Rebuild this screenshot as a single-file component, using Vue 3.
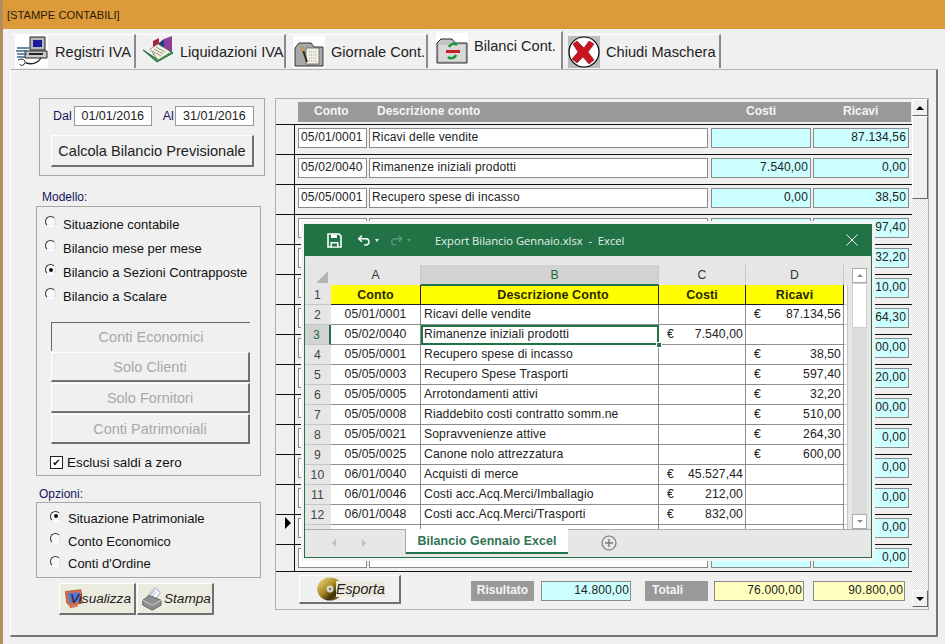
<template>
  <div class="app">
    <div class="title">[STAMPE CONTABILI]</div>

    <div class="tabs">
      <div class="tab t1">
        <svg class="tab-ico" width="33" height="33" viewBox="0 0 33 33">
          <rect width="33" height="33" fill="#fff"/>
          <path d="M15 2h15v13H15z" fill="#b8b8b8" stroke="#222"/>
          <rect x="18" y="5" width="9" height="7" fill="#1a1a9a"/>
          <path d="M10 16h22v7H10z" fill="#c8c8c8" stroke="#222"/>
          <path d="M14 19h14" stroke="#222" stroke-width="2"/>
          <path d="M2 13h12M1 16h11M2 19h10M2 22h9" stroke="#3a6a8a" stroke-width="1.5"/>
          <path d="M3 25c4-2 8 0 7 3s-5 3-5 1" fill="#fff" stroke="#222"/>
          <path d="M11 28c6 2 12 0 15-5" fill="none" stroke="#222" stroke-width="1.4"/>
        </svg>
        <span>Registri IVA</span>
      </div>
      <div class="tab t2">
        <svg class="tab-ico" width="33" height="33" viewBox="0 0 33 33">
          <path d="M11 6l6-3v14l-6 3z" fill="#b3223a"/>
          <path d="M17 8l5-4v13l-5 2z" fill="#1e3f7a"/>
          <path d="M22 4l8-3v16l-8 3z" fill="#8a3fa0"/>
          <path d="M1 15l14 12 16-9-3-3-13 9z" fill="#3da35a" stroke="#1e6a36"/>
          <path d="M8 14l8-5 13 8-13 8z" fill="#f4f3dc" stroke="#666" stroke-width=".6"/>
          <path d="M12 14l9 5M14 12l9 5M10 16l9 5" stroke="#777" stroke-width=".8"/>
        </svg>
        <span>Liquidazioni IVA</span>
      </div>
      <div class="tab t3">
        <svg class="tab-ico" width="32" height="32" viewBox="0 0 32 32">
          <rect width="32" height="32" fill="#fff"/>
          <path d="M2 12l4-5h12l3 4h9v19H2z" fill="#a8a8a8" stroke="#333"/>
          <path d="M13 12h13v16H13z" fill="#f2f2e8" stroke="#555" stroke-width=".7"/>
          <path d="M16 16h8M16 19h8M16 22h8M16 25h8" stroke="#999" stroke-dasharray="1 1"/>
          <path d="M9 11l5 15" stroke="#3a2a14" stroke-width="2"/>
          <path d="M9 11l1.5 4" stroke="#e0b040" stroke-width="2"/>
        </svg>
        <span>Giornale Cont.</span>
      </div>
      <div class="tab t4 active">
        <svg class="tab-ico" width="32" height="32" viewBox="0 0 32 32">
          <rect width="32" height="32" fill="#fff"/>
          <path d="M1 10l4-4h11l3 4h12v20H1z" fill="#c4c4c4" stroke="#222"/>
          <path d="M3 12h26v16H3z" fill="#d8d8d8"/>
          <path d="M21 12a5 5 0 0 0-8 2M12 24a5 5 0 0 0 8-2" fill="none" stroke="#149a3c" stroke-width="2.6"/>
          <rect x="10" y="17" width="14" height="3" fill="#c8202a"/>
        </svg>
        <span>Bilanci Cont.</span>
      </div>
      <div class="tab t5">
        <svg class="tab-ico" width="32" height="32" viewBox="0 0 32 32">
          <rect width="32" height="32" fill="#bcbcbc"/>
          <circle cx="16" cy="16" r="15" fill="#fff" stroke="#000" stroke-width="1.2"/>
          <path d="M9 5l7 7 5-7 5 3-6 8 6 8-5 4-6-7-6 6-5-4 6-7-5-8z" fill="#c8141e" stroke="#8a1018" stroke-width=".6"/>
        </svg>
        <span>Chiudi Maschera</span>
      </div>
    </div>

    <div class="panel">
      <div class="left">
        <div class="box date-box">
          <div class="dates">
            <label>Dal</label><div class="date">01/01/2016</div>
            <label class="al">Al</label><div class="date d2">31/01/2016</div>
          </div>
          <button class="btn calc">Calcola Bilancio Previsionale</button>
        </div>

        <div class="group-label modello">Modello:</div>
        <div class="box model-box">
          <div v-for="(m, i) in modelli" :key="m" class="radio-row">
            <span class="radio" :class="{ on: i === 2 }"></span>{{ m }}
          </div>
          <div class="disabled-btns">
            <div class="btn dis first">Conti Economici</div>
            <div class="btn dis">Solo Clienti</div>
            <div class="btn dis">Solo Fornitori</div>
            <div class="btn dis">Conti Patrimoniali</div>
          </div>
          <div class="check-row"><span class="check">✔</span>Esclusi saldi a zero</div>
        </div>

        <div class="group-label opzioni">Opzioni:</div>
        <div class="box opt-box">
          <div v-for="(o, i) in opzioni" :key="o" class="radio-row opt">
            <span class="radio" :class="{ on: i === 0 }"></span>{{ o }}
          </div>
        </div>

        <div class="print-btns">
          <div class="btn print vis">
            <svg class="print-ico" width="19" height="20" viewBox="0 0 27 24" preserveAspectRatio="none">
              <path d="M2 3l22-2 2 16-18 3-4-3z" fill="#d8704a" stroke="#a84a2c"/>
              <path d="M5 5l17-1 1 11-15 2z" fill="#5a74d8"/>
              <path d="M7 21l12-2 1 2-11 2z" fill="#d8704a"/>
            </svg>
            <span class="v-label">Visualizza</span>
          </div>
          <div class="btn print sta">
            <svg class="print-ico" width="22" height="24" viewBox="0 0 30 29" preserveAspectRatio="none">
              <path d="M9 10l9-9 7 6-9 10z" fill="#fff" stroke="#6a8aa8"/>
              <path d="M12 9l6-5M14 11l6-5" stroke="#6a8aa8"/>
              <path d="M1 16l9-6 16 6v6l-12 6-13-6z" fill="#8e8e8e" stroke="#555"/>
              <path d="M1 16l13 6 12-6" fill="none" stroke="#ddd"/>
            </svg>
            <span class="s-label">Stampa</span>
          </div>
        </div>
      </div>

      <div class="grid-wrap">
        <div class="grid">
          <div class="grid-head">
            <div class="h-spacer"></div>
            <div class="h-bar">
              <span class="h-conto">Conto</span>
              <span class="h-desc">Descrizione conto</span>
              <span class="h-costi">Costi</span>
              <span class="h-ricavi">Ricavi</span>
            </div>
          </div>
          <div class="rows">
            <div v-for="(r, i) in gridRows" :key="i" class="row" :class="{ last: i === gridRows.length - 1 }">
              <div class="row-head"><span v-if="i === 13" class="pointer"></span></div>
              <div class="cell conto">{{ r[0] }}</div>
              <div class="cell desc">{{ r[1] }}</div>
              <div class="cell num costi">{{ r[2] }}</div>
              <div class="cell num ricavi">{{ r[3] }}</div>
            </div>
          </div>
          <div class="grid-foot">
            <div class="btn esporta">
              <svg class="cd" width="26" height="24" viewBox="0 0 30 28">
                <defs>
                  <linearGradient id="gold" x1="0" y1="0" x2="1" y2="1">
                    <stop offset="0" stop-color="#f2e490"/>
                    <stop offset=".45" stop-color="#a88a20"/>
                    <stop offset=".7" stop-color="#3a2e08"/>
                    <stop offset="1" stop-color="#c8ac40"/>
                  </linearGradient>
                </defs>
                <ellipse cx="15" cy="14" rx="15" ry="13.5" fill="url(#gold)"/>
                <circle cx="15" cy="14" r="4" fill="#d8d8d0"/>
                <circle cx="15" cy="14" r="1.6" fill="#777"/>
              </svg>
              <span class="esp-label">Esporta</span>
            </div>
            <div class="tag ris">Risultato</div>
            <div class="field blue">14.800,00</div>
            <div class="tag tot">Totali</div>
            <div class="field yellow f1">76.000,00</div>
            <div class="field yellow f2">90.800,00</div>
          </div>
        </div>
        <div class="scroll">
          <div class="sb-btn"><span class="up"></span></div>
          <div class="thumb"></div>
          <div class="track"></div>
          <div class="sb-btn low"><span class="down"></span></div>
        </div>

        <div class="excel">
          <div class="x-title">
            <svg class="x-save" width="15" height="15" viewBox="0 0 15 15">
              <path d="M1 1h11l2 2v11H1z" fill="none" stroke="#fff" stroke-width="1.6"/>
              <path d="M4 1.5h6v3.5H4zM3.5 9h8v5h-8z" fill="#fff"/>
              <rect x="5" y="10.5" width="5" height="3" fill="#217346"/>
            </svg>
            <svg class="x-undo" width="15" height="13" viewBox="0 0 17 13">
              <path d="M5.5 1L2 4.5 5.5 8" fill="none" stroke="#fff" stroke-width="1.7"/>
              <path d="M2 4.5h7.5a3.5 3.5 0 0 1 1 7H8" fill="none" stroke="#fff" stroke-width="1.7"/>
            </svg>
            <span class="caret"></span>
            <svg class="x-redo" width="13" height="13" viewBox="0 0 15 13">
              <path d="M10 1l3.5 3.5L10 8M13 4.5H6a3.5 3.5 0 0 0-1 7h2" fill="none" stroke="#5d9a7a" stroke-width="1.5"/>
            </svg>
            <span class="caret dim"></span>
            <span class="x-name">{{ excelTitle }}</span>
            <svg class="x-close" width="12" height="12" viewBox="0 0 12 12">
              <path d="M.5.5l11 11M11.5.5l-11 11" stroke="#e8f0ec" stroke-width="1"/>
            </svg>
          </div>
          <div class="x-gap"></div>
          <div class="x-body">
            <div class="x-sheet">
              <div class="x-cols">
                <div class="x-corner"><span class="tri"></span></div>
                <div class="xc a">A</div>
                <div class="xc b sel">B</div>
                <div class="xc c">C</div>
                <div class="xc d">D</div>
              </div>
              <div class="x-row hdr">
                <div class="xn">1</div>
                <div class="xd a">Conto</div>
                <div class="xd b">Descrizione Conto</div>
                <div class="xd c">Costi</div>
                <div class="xd d">Ricavi</div>
                <div class="xd e"></div>
              </div>
              <div v-for="(r, i) in excelRows" :key="i" class="x-row" :class="{ cur: i === 1 }">
                <div class="xn">{{ i + 2 }}</div>
                <div class="xd a">{{ r[0] }}</div>
                <div class="xd b">{{ r[1] }}</div>
                <div class="xd c money"><template v-if="r[2]"><span>€</span><span>{{ r[2] }}</span></template></div>
                <div class="xd d money"><template v-if="r[3]"><span>€</span><span>{{ r[3] }}</span></template></div>
                <div class="xd e"></div>
              </div>
              <div class="x-row stub">
                <div class="xn"></div>
                <div class="xd a"></div>
                <div class="xd b"></div>
                <div class="xd c"></div>
                <div class="xd d"></div>
                <div class="xd e"></div>
              </div>
            </div>
            <div class="x-scroll">
              <div class="xs-btn"><span class="xup"></span></div>
              <div class="xs-thumb"></div>
              <div class="xs-track"></div>
              <div class="xs-btn"><span class="xdown"></span></div>
            </div>
          </div>
          <div class="x-tabs">
            <div class="x-nav">
              <span class="nav-l"></span>
              <span class="nav-r"></span>
            </div>
            <div class="x-tab">Bilancio Gennaio Excel</div>
            <svg class="x-plus" width="16" height="16" viewBox="0 0 16 16">
              <circle cx="8" cy="8" r="7" fill="none" stroke="#7a7a7a" stroke-width="1.2"/>
              <path d="M8 4v8M4 8h8" stroke="#7a7a7a" stroke-width="1.4"/>
            </svg>
          </div>
        </div>
      </div>
    </div>
  </div>
</template>

<script setup>
const excelTitle = 'Export Bilancio Gennaio.xlsx  -  Excel'

const modelli = [
  'Situazione contabile',
  'Bilancio mese per mese',
  'Bilancio a Sezioni Contrapposte',
  'Bilancio a Scalare'
]
const opzioni = ['Situazione Patrimoniale', 'Conto Economico', "Conti d'Ordine"]

const excelRows = [
  ['05/01/0001', 'Ricavi delle vendite', '', '87.134,56'],
  ['05/02/0040', 'Rimanenze iniziali prodotti', '7.540,00', ''],
  ['05/05/0001', 'Recupero spese di incasso', '', '38,50'],
  ['05/05/0003', 'Recupero Spese Trasporti', '', '597,40'],
  ['05/05/0005', 'Arrotondamenti attivi', '', '32,20'],
  ['05/05/0008', 'Riaddebito costi contratto somm.ne', '', '510,00'],
  ['05/05/0021', 'Sopravvenienze attive', '', '264,30'],
  ['05/05/0025', 'Canone nolo attrezzatura', '', '600,00'],
  ['06/01/0040', 'Acquisti di merce', '45.527,44', ''],
  ['06/01/0046', 'Costi acc.Acq.Merci/Imballagio', '212,00', ''],
  ['06/01/0048', 'Costi acc.Acq.Merci/Trasporti', '832,00', '']
]

const gridRows = [
  ['05/01/0001', 'Ricavi delle vendite', '', '87.134,56'],
  ['05/02/0040', 'Rimanenze iniziali prodotti', '7.540,00', '0,00'],
  ['05/05/0001', 'Recupero spese di incasso', '0,00', '38,50'],
  ['', '', '', '597,40'],
  ['', '', '', '32,20'],
  ['', '', '', '510,00'],
  ['', '', '', '264,30'],
  ['', '', '', '600,00'],
  ['', '', '', '120,00'],
  ['', '', '', '100,00'],
  ['', '', '', '0,00'],
  ['', '', '', '0,00'],
  ['', '', '', '0,00'],
  ['', '', '', '0,00'],
  ['', '', '', '0,00']
]
</script>

<style>
html, body { margin: 0; overflow: hidden; background: #f0f0f0; }
</style>

<style scoped>
.app {
  width: 945px;
  height: 644px;
  box-sizing: border-box;
  border-left: 3px solid #b48d5c;
  background: #f0f0f0;
  font-family: "Liberation Sans", Arial, sans-serif;
  color: #111;
  overflow: hidden;
}
.title {
  height: 29px;
  margin-left: -3px;
  padding-left: 7px;
  background: #dc9a3a;
  font-size: 11.2px;
  line-height: 30px;
  color: #2a1a08;
}

/* tabs */
.tabs {
  display: flex;
  align-items: flex-end;
  height: 40px;
  padding-left: 9px;
  position: relative;
  z-index: 2;
}
.tab {
  height: 33px;
  display: flex;
  align-items: center;
  margin-right: 2px;
  background: #f0f0f0;
  border-top: 1px solid #fff;
  border-right: 2px solid #8a8a8a;
  box-sizing: content-box;
  font-size: 14.6px;
  color: #222;
  margin-bottom: 1px;
  white-space: nowrap;
}
.t1 { width: 122px; }
.t2 { width: 146px; }
.t3 { width: 138px; }
.t4 { width: 131px; }
.t5 { width: 154px; }
.tab-ico { margin-left: 3px; margin-right: 7px; flex: none; }
.t2 .tab-ico { margin-right: 5px; margin-left: 4px; }
.t3 .tab-ico { margin-left: 5px; margin-right: 6px; }
.t5 .tab-ico { margin-left: 3px; margin-right: 6px; }
.active {
  height: 36px;
  margin-bottom: 0;
  background: #f4f4f4;
  align-items: flex-start;
  padding-top: 1px;
}
.active span { padding-top: 5px; }
.active .tab-ico { margin-left: 6px; margin-right: 6px; }

/* panel */
.panel {
  position: relative;
  box-sizing: border-box;
  width: 928px;
  height: 568px;
  margin-left: 7px;
  border-top: 1px solid #b4b4b4;
  border-left: 1px solid #fff;
  border-right: 2px solid #777;
  border-bottom: 2px solid #777;
  display: flex;
  padding: 28px 0 0 25px;
}

/* left column */
.left { width: 239px; flex: none; }
.box {
  border: 1px solid #a8a8a8;
  box-sizing: border-box;
  background: #f0f0f0;
}
.date-box {
  width: 226px;
  height: 78px;
  margin-left: 3px;
  padding: 7px 0 0 13px;
}
.dates { display: flex; align-items: center; font-size: 12.5px; color: #14145a; }
.date {
  width: 76px;
  height: 18px;
  margin-left: 2px;
  border: 1px solid #999;
  background: #fff;
  color: #222;
  font-size: 12.5px;
  line-height: 18px;
  text-align: center;
  box-sizing: content-box;
}
.al { margin-left: 11px; }
.d2 { width: 77px; margin-left: 1px; }
.btn {
  background: #f0f0f0;
  border: 0;
  border-top: 1px solid #fff;
  border-left: 1px solid #fff;
  border-right: 2px solid #707070;
  border-bottom: 2px solid #707070;
  box-sizing: border-box;
  font-family: inherit;
  color: #222;
}
.calc {
  display: block;
  width: 203px;
  height: 32px;
  margin: 9px 0 0 -2px;
  padding: 0;
  font-size: 14.6px;
}
.group-label { font-size: 12px; color: #14145a; }
.modello { margin: 13px 0 0 6px; height: 17px; line-height: 16px; }
.model-box {
  position: relative;
  width: 225px;
  height: 270px;
  padding: 5px 0 0 8px;
  font-size: 13px;
}
.radio-row {
  height: 24px;
  display: flex;
  align-items: center;
  color: #111;
  white-space: nowrap;
}
.radio {
  display: inline-block;
  position: relative;
  width: 11px;
  height: 11px;
  margin: -5px 7px 0 0;
  border-radius: 50%;
  border: 1px solid;
  border-color: #333 #ddd #fff #333;
  background: #f8f8f8;
  box-sizing: border-box;
  flex: none;
}
.radio.on::after {
  content: "";
  position: absolute;
  left: 2.5px;
  top: 2.5px;
  width: 4px;
  height: 4px;
  border-radius: 50%;
  background: #111;
}
.disabled-btns { margin: 14px 0 0 6px; width: 199px; }
.dis {
  height: 30px;
  margin-bottom: 1px;
  text-align: center;
  color: #a8a8a8;
  font-size: 14.5px;
  line-height: 29px;
}
.first {
  height: 29px;
  border-top: 1px solid #6a6a6a;
  border-left: 1px solid #6a6a6a;
  border-right: 0;
  border-bottom: 0;
  background: repeating-conic-gradient(#f7f7f7 0 25%, #e9e9e9 0 50%) 0 0 / 2px 2px;
}
.check-row { display: flex; align-items: center; margin: 11px 0 0 5px; font-size: 13.4px; }
.check {
  width: 11px;
  height: 11px;
  margin-right: 4px;
  border: 1px solid #222;
  background: #fff;
  font-size: 10px;
  line-height: 11px;
  text-align: center;
  font-family: "DejaVu Sans", sans-serif;
}
.opzioni { margin: 10px 0 0 3px; height: 16px; line-height: 16px; }
.opt-box {
  width: 225px;
  height: 76px;
  padding: 4px 0 0 13px;
  font-size: 13px;
}
.opt { height: 22.5px; }
.opt:first-child { height: 23px; }
.print-btns { display: flex; gap: 1px; margin: 5px 0 0 23px; }
.print {
  width: 77px;
  height: 32px;
  position: relative;
  background: #ecebdf;
  font-size: 13.6px;
  font-style: italic;
  display: flex;
  align-items: center;
}
.print-ico { flex: none; }
.vis .print-ico { margin-left: 4px; }
.sta .print-ico { margin-left: 4px; }
.v-label { margin-left: -13px; position: relative; }
.s-label { margin-left: 0; position: relative; }

/* grid */
.grid-wrap {
  position: relative;
  display: flex;
  width: 654px;
  height: 512px;
  box-sizing: border-box;
  border: 1px solid #b0b0b0;
}
.grid { width: 636px; flex: none; }
.grid-head { display: flex; height: 25px; padding-top: 3px; box-sizing: border-box; }
.h-spacer { width: 22px; flex: none; }
.h-bar {
  width: 613px;
  height: 20px;
  background: #999;
  color: #f4f4f4;
  font-size: 12px;
  font-weight: bold;
  line-height: 19px;
  position: relative;
  display: flex;
}
.h-conto { margin-left: 16px; width: 63px; }
.h-desc { width: 369px; }
.h-costi { width: 97px; }
.row {
  display: flex;
  height: 30px;
  box-sizing: border-box;
  border-top: 1px solid #111;
  width: 636px;
  padding-top: 3px;
}
.row.last { height: 28px; border-bottom: 1px solid #111; overflow: hidden; }
.row-head {
  width: 18px;
  flex: none;
  margin-top: -3px;
  margin-right: 3px;
  border-right: 1px solid #111;
  position: relative;
}
.pointer {
  position: absolute;
  left: 9px;
  top: 2px;
  border-left: 6px solid #000;
  border-top: 6px solid transparent;
  border-bottom: 6px solid transparent;
}
.cell {
  height: 20px;
  box-sizing: border-box;
  border: 1px solid #8a8a8a;
  background: #fff;
  font-size: 12px;
  line-height: 16px;
  padding: 0 2px;
  color: #222;
  letter-spacing: .15px;
  white-space: nowrap;
  overflow: hidden;
  flex: none;
}
.conto { width: 69px; margin-right: 2px; }
.desc { width: 339px; margin-right: 3px; }
.num { text-align: right; background: #ccffff; }
.costi { width: 100px; margin-right: 2px; }
.ricavi { width: 96px; }

.grid-foot { display: flex; align-items: flex-start; height: 38px; padding-left: 23px; position: relative; }
.esporta {
  width: 102px;
  height: 29px;
  margin-top: 3px;
  display: flex;
  align-items: center;
  font-size: 14.2px;
  font-style: italic;
  color: #222;
  flex: none;
}
.cd { margin-left: 17px; flex: none; }
.esp-label { margin-left: -7px; position: relative; background: #ebe9dd; padding-right: 0; }
.tag {
  height: 20px;
  background: #999;
  color: #f4f4f4;
  font-size: 12px;
  font-weight: bold;
  line-height: 19px;
  margin-top: 9px;
  flex: none;
  box-sizing: border-box;
}
.ris { width: 63px; margin-left: 70px; text-align: center; }
.tot { width: 63px; margin-left: 14px; padding-left: 7px; }
.field {
  height: 20px;
  box-sizing: border-box;
  border: 1px solid #8a8a8a;
  margin-top: 9px;
  font-size: 12px;
  line-height: 17px;
  text-align: right;
  padding-right: 1px;
  letter-spacing: .15px;
  flex: none;
  color: #222;
}
.blue { width: 90px; margin-left: 7px; background: #ccffff; }
.yellow { background: #ffffc0; }
.f1 { width: 90px; margin-left: 6px; }
.f2 { width: 92px; margin-left: 9px; }

/* scrollbar of the grid */
.scroll {
  width: 16px;
  height: 508px;
  display: flex;
  flex-direction: column;
  flex: none;
}
.sb-btn {
  height: 17px;
  box-sizing: border-box;
  background: #f0f0f0;
  border-right: 1px solid #666;
  border-bottom: 1px solid #666;
  border-top: 1px solid #fff;
  border-left: 1px solid #fff;
  display: flex;
  align-items: center;
  justify-content: center;
  flex: none;
}
.up { border: 4px solid transparent; border-top: 0; border-bottom: 4px solid #000; }
.down { border: 4px solid transparent; border-bottom: 0; border-top: 4px solid #000; }
.thumb {
  height: 83px;
  box-sizing: border-box;
  background: #f0f0f0;
  border-top: 1px solid #fff;
  border-left: 1px solid #fff;
  border-right: 1px solid #666;
  border-bottom: 1px solid #666;
  flex: none;
}
.track {
  flex: 1;
  background: repeating-conic-gradient(#fafafa 0 25%, #e2e2e2 0 50%) 0 0 / 2px 2px;
}

/* excel window over the grid */
.excel {
  position: absolute;
  left: 28px;
  top: 125px;
  width: 568px;
  height: 334px;
  box-sizing: border-box;
  border: 1px solid #217346;
  outline: 3px solid #f4f4f4;
  background: #e7e7e7;
  font-size: 12.2px;
  letter-spacing: .1px;
  color: #222;
}
.x-title {
  height: 32px;
  margin: -1px -1px 0;
  background: #217346;
  color: #e6f0ea;
  display: flex;
  align-items: center;
  padding-left: 23px;
  font-family: "Open Sans", "Liberation Sans", sans-serif;
  font-size: 11.2px;
  letter-spacing: 0;
}
.x-undo { margin-left: 15px; }
.caret {
  margin-left: 3px;
  border: 2.5px solid transparent;
  border-bottom: 0;
  border-top: 3px solid #e6f0ea;
}
.caret.dim { border-top-color: #5d9a7a; margin-left: 4px; }
.x-redo { margin-left: 11px; }
.x-name { margin-left: 24px; white-space: pre; flex: 1; }
.x-close { margin-right: 14px; }
.x-gap { height: 9px; }
.x-body { display: flex; height: 264px; overflow: hidden; }
.x-sheet { width: 543px; overflow: hidden; flex: none; }
.x-cols { display: flex; height: 20px; background: #e6e6e6; }
.x-corner { width: 26px; position: relative; flex: none; }
.tri {
  position: absolute;
  right: 3px;
  bottom: 2px;
  border-left: 12px solid transparent;
  border-bottom: 12px solid #b4b4b4;
}
.xc {
  box-sizing: border-box;
  text-align: center;
  line-height: 20px;
  border-right: 1px solid #c6c6c6;
  color: #333;
  flex: none;
}
.a { width: 90px; }
.b { width: 238px; }
.c { width: 87px; }
.d { width: 98px; }
.e { width: 4px; }
.xc.b { padding-left: 30px; }
.xc.sel { background: #d2d2d2; color: #1f6a42; border-bottom: 1px solid #217346; }
.x-row { display: flex; height: 20px; }
.xn {
  width: 26px;
  box-sizing: border-box;
  background: #e6e6e6;
  text-align: center;
  line-height: 21px;
  color: #444;
  flex: none;
  padding-right: 1px;
  border-bottom: 1px solid #c6c6c6;
}
.cur .xn { background: #d2d2d2; color: #1f6a42; border-right: 2px solid #217346; }
.xd {
  box-sizing: border-box;
  background: #fff;
  border-right: 1px solid #8c8c8c;
  border-bottom: 1px solid #8c8c8c;
  line-height: 19px;
  padding: 0 3px;
  white-space: nowrap;
  overflow: hidden;
  flex: none;
}
.xd.a { text-align: center; }
.xd.e { padding: 0; border-right-color: #c6c6c6; border-bottom-color: #d4d4d4; }
.hdr .xd {
  background: #ffff00;
  border-right: 1px solid #222;
  border-bottom: 1px solid #222;
  font-weight: bold;
  text-align: center;
  font-size: 12.5px;
  line-height: 21px;
  color: #2a2a00;
}
.hdr .xd.b { padding-left: 30px; border-top: 1px solid #217346; line-height: 19px; }
.hdr .xd.e { background: #fff; border-right-color: #c6c6c6; border-bottom-color: #d4d4d4; }
.money { display: flex; justify-content: space-between; padding: 0 2px 0 8px; }
.cur .xd.b {
  outline: 2px solid #217346;
  outline-offset: -2px;
  position: relative;
  overflow: visible;
  z-index: 1;
}
.cur .xd.b::after {
  content: "";
  position: absolute;
  right: -4px;
  bottom: -4px;
  width: 6px;
  height: 6px;
  background: #217346;
  border: 1px solid #fff;
  box-sizing: border-box;
}
.stub .xd, .stub .xn { border-bottom: 0; }
.x-scroll {
  width: 15px;
  margin-left: 4px;
  display: flex;
  flex-direction: column;
  background: #dcdcdc;
  flex: none;
  margin-top: 3px;
}
.xs-btn {
  height: 15px;
  box-sizing: border-box;
  border: 1px solid #ababab;
  background: #fff;
  display: flex;
  align-items: center;
  justify-content: center;
  flex: none;
}
.xup { border: 3.5px solid transparent; border-top: 0; border-bottom: 3.5px solid #8a8a8a; }
.xdown { border: 3.5px solid transparent; border-bottom: 0; border-top: 3.5px solid #8a8a8a; }
.xs-thumb { height: 45px; background: #fff; border: 1px solid #d0d0d0; box-sizing: border-box; flex: none; }
.xs-track { flex: 1; }
.x-tabs {
  display: flex;
  align-items: flex-start;
  height: 28px;
  box-sizing: border-box;
  border-top: 1px solid #ababab;
  background: #e7e7e7;
  position: relative;
}
.x-nav { width: 100px; height: 24px; border-right: 1px solid #ababab; position: relative; flex: none; }
.nav-l, .nav-r { position: absolute; top: 9px; border: 4px solid transparent; }
.nav-l { left: 27px; border-left: 0; border-right: 4px solid #c0c0c0; }
.nav-r { left: 57px; border-right: 0; border-left: 4px solid #c0c0c0; }
.x-tab {
  width: 162px;
  height: 23px;
  margin-top: -1px;
  background: #fff;
  border-bottom: 2px solid #217346;
  box-sizing: content-box;
  color: #2f7350;
  font-weight: bold;
  font-size: 12.4px;
  line-height: 25px;
  text-align: center;
  flex: none;
}
.x-plus { margin: 5px 0 0 33px; }
</style>
